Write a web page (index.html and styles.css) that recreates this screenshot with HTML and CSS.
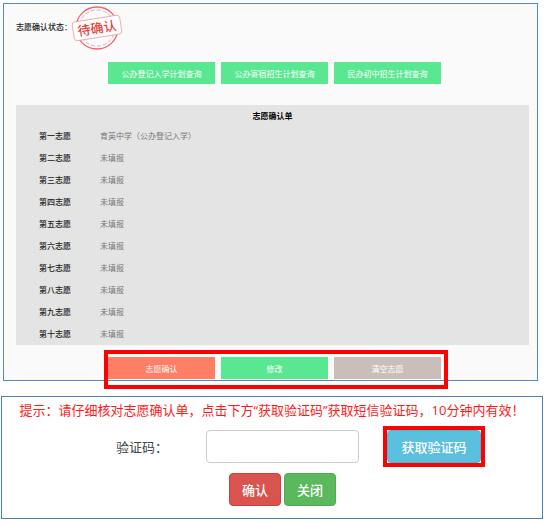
FILE: index.html
```html
<!DOCTYPE html>
<html lang="zh-CN">

<head>
    <meta charset="UTF-8">
    <meta name="viewport" content="width=device-width, initial-scale=1.0">
    <title>志愿确认</title>
    <link rel="stylesheet" href="styles.css">
</head>

<body>
    <div class="confirm-panel">
        <div class="status">
            <span class="status-label">志愿确认状态：</span>
            <!-- 待确认印章 -->
            <svg class="stamp" viewBox="0 0 52 46" role="img" aria-label="待确认">
                <circle cx="25" cy="23" r="21" fill="none" stroke="#f0616b" stroke-width="1.3" />
                <circle cx="25" cy="23" r="18" fill="none" stroke="#f4949a" stroke-width="0.8" stroke-dasharray="4 2" />
                <g transform="rotate(-9 25 23)">
                    <rect x="1" y="13.5" width="48" height="19" rx="3" fill="#fff" stroke="#f39a9a" stroke-width="0.8" />
                    <text class="stamp-text" x="25" y="28" text-anchor="middle">待确认</text>
                </g>
            </svg>
        </div>

        <div class="query-buttons">
            <button class="panel-btn">公办登记入学计划查询</button>
            <button class="panel-btn">公办寄宿招生计划查询</button>
            <button class="panel-btn">民办初中招生计划查询</button>
        </div>

        <table class="wish-table">
            <caption>志愿确认单</caption>
            <tbody>
                <tr><th scope="row">第一志愿</th><td>育英中学（公办登记入学）</td></tr>
                <tr><th scope="row">第二志愿</th><td>未填报</td></tr>
                <tr><th scope="row">第三志愿</th><td>未填报</td></tr>
                <tr><th scope="row">第四志愿</th><td>未填报</td></tr>
                <tr><th scope="row">第五志愿</th><td>未填报</td></tr>
                <tr><th scope="row">第六志愿</th><td>未填报</td></tr>
                <tr><th scope="row">第七志愿</th><td>未填报</td></tr>
                <tr><th scope="row">第八志愿</th><td>未填报</td></tr>
                <tr><th scope="row">第九志愿</th><td>未填报</td></tr>
                <tr><th scope="row">第十志愿</th><td>未填报</td></tr>
            </tbody>
        </table>

        <div class="actions">
            <div class="highlight action-buttons">
                <button class="panel-btn submit-btn">志愿确认</button>
                <button class="panel-btn">修改</button>
                <button class="panel-btn clear-btn">清空志愿</button>
            </div>
        </div>
    </div>

    <div class="code-panel">
        <p class="tip">提示：请仔细核对志愿确认单，点击下方“获取验证码”获取短信验证码，10分钟内有效！</p>
        <div class="code-row">
            <label for="code">验证码：</label>
            <input type="text" id="code">
            <div class="highlight">
                <button class="btn get-code-btn">获取验证码</button>
            </div>
        </div>
        <div class="code-footer">
            <button class="btn ok-btn">确认</button>
            <button class="btn close-btn">关闭</button>
        </div>
    </div>
</body>

</html>
```

FILE: styles.css
```css
* {
    box-sizing: border-box;
}

body {
    margin: 0;
    padding: 3px 4px 3px 1px;
    background-color: white;
    font-family: "Open Sans", "Noto Sans CJK SC", sans-serif;
}

button,
input {
    font-family: inherit;
}

/* 志愿确认 */
.confirm-panel {
    margin: 0 5px 0 2px;
    padding: 1px 8px 0 12px;
    border: 1px solid #4f8aca;
    background-color: #fafafa;
    font-size: 8px;
}

.status {
    display: flex;
    align-items: center;
    color: #222;
    font-weight: 500;
}

.status-label {
    padding-bottom: 3px;
}

.stamp {
    width: 52px;
    height: 46px;
}

.stamp-text {
    font-size: 13px;
    font-weight: 500;
    fill: #e2453c;
}

.query-buttons {
    display: flex;
    justify-content: center;
    gap: 6px;
    margin-top: 11px;
    padding-left: 4px;
}

.panel-btn {
    width: 107px;
    height: 22px;
    padding: 0;
    border: none;
    background-color: #5ae792;
    color: white;
    font-size: 8px;
    cursor: pointer;
}

.wish-table {
    width: 100%;
    margin-top: 21px;
    border-collapse: collapse;
    background-color: #e4e4e4;
    line-height: 12px;
}

.wish-table caption {
    height: 20px;
    background-color: #e4e4e4;
    color: black;
    font-weight: bold;
    line-height: 22px;
}

.wish-table th,
.wish-table td {
    height: 22px;
    padding: 0;
    text-align: left;
}

.wish-table th {
    width: 84px;
    padding-left: 23px;
    color: #222;
    font-weight: 500;
}

.wish-table td {
    color: #777;
}

.highlight {
    border: 4px solid #fe0000;
}

.actions {
    display: flex;
    justify-content: center;
    margin: 5px 0 -9px;
    padding-left: 7px;
}

.action-buttons {
    display: flex;
    gap: 6px;
    padding: 3px 3px 6px 0;
}

.submit-btn {
    background-color: #ff7f66;
}

.clear-btn {
    background-color: #cabebb;
}

/* 短信验证码 */
.code-panel {
    margin-top: 15px;
    padding: 3px 9px 12px;
    border: 1px solid #4680bd;
    background-color: white;
    font-size: 13px;
}

.tip {
    margin: 0;
    color: #ff1a1a;
    line-height: 20px;
    text-align: center;
    white-space: nowrap;
}

.code-row {
    display: flex;
    justify-content: center;
    align-items: center;
    margin-top: 6px;
    padding-left: 57px;
}

.code-row label {
    width: 90px;
    color: #444;
}

.code-row input {
    width: 153px;
    height: 33px;
    margin-right: 24px;
    padding: 4px 8px;
    border: 1px solid #ccc;
    border-radius: 4px;
    font-size: 13px;
}

.btn {
    height: 33px;
    padding: 0 12px;
    border: 1px solid;
    border-radius: 4px;
    color: white;
    font-size: 13px;
    font-weight: 500;
    cursor: pointer;
}

.get-code-btn {
    display: block;
    width: 94px;
    background-color: #5bc0de;
    border-color: #46b8da;
}

.code-footer {
    display: flex;
    justify-content: center;
    gap: 3px;
    margin-top: 6px;
    padding-left: 21px;
}

.ok-btn {
    background-color: #d9534f;
    border-color: #d43f3a;
}

.close-btn {
    background-color: #5cb85c;
    border-color: #4cae4c;
}
```
